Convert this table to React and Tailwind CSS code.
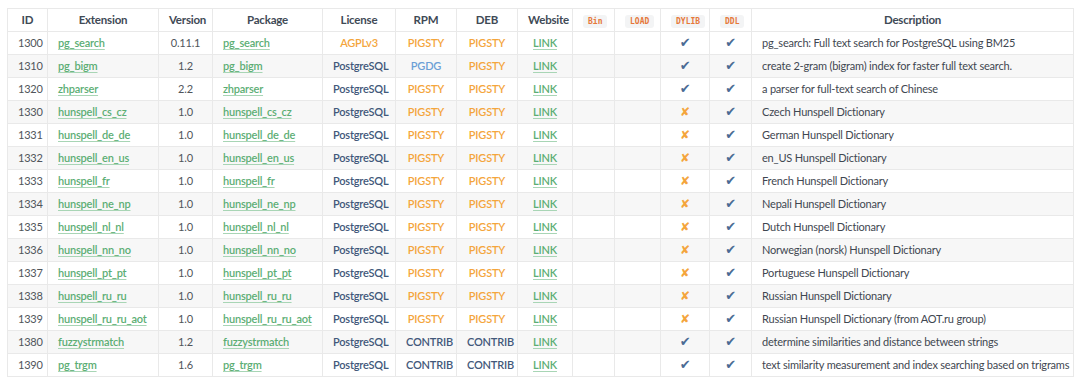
import React from "react";

const rows = [
  ["1300", "pg_search", "0.11.1", "pg_search", "AGPLv3", "PIGSTY", "PIGSTY", false, "pg_search: Full text search for PostgreSQL using BM25"],
  ["1310", "pg_bigm", "1.2", "pg_bigm", "PostgreSQL", "PGDG", "PIGSTY", false, "create 2-gram (bigram) index for faster full text search."],
  ["1320", "zhparser", "2.2", "zhparser", "PostgreSQL", "PIGSTY", "PIGSTY", false, "a parser for full-text search of Chinese"],
  ["1330", "hunspell_cs_cz", "1.0", "hunspell_cs_cz", "PostgreSQL", "PIGSTY", "PIGSTY", true, "Czech Hunspell Dictionary"],
  ["1331", "hunspell_de_de", "1.0", "hunspell_de_de", "PostgreSQL", "PIGSTY", "PIGSTY", true, "German Hunspell Dictionary"],
  ["1332", "hunspell_en_us", "1.0", "hunspell_en_us", "PostgreSQL", "PIGSTY", "PIGSTY", true, "en_US Hunspell Dictionary"],
  ["1333", "hunspell_fr", "1.0", "hunspell_fr", "PostgreSQL", "PIGSTY", "PIGSTY", true, "French Hunspell Dictionary"],
  ["1334", "hunspell_ne_np", "1.0", "hunspell_ne_np", "PostgreSQL", "PIGSTY", "PIGSTY", true, "Nepali Hunspell Dictionary"],
  ["1335", "hunspell_nl_nl", "1.0", "hunspell_nl_nl", "PostgreSQL", "PIGSTY", "PIGSTY", true, "Dutch Hunspell Dictionary"],
  ["1336", "hunspell_nn_no", "1.0", "hunspell_nn_no", "PostgreSQL", "PIGSTY", "PIGSTY", true, "Norwegian (norsk) Hunspell Dictionary"],
  ["1337", "hunspell_pt_pt", "1.0", "hunspell_pt_pt", "PostgreSQL", "PIGSTY", "PIGSTY", true, "Portuguese Hunspell Dictionary"],
  ["1338", "hunspell_ru_ru", "1.0", "hunspell_ru_ru", "PostgreSQL", "PIGSTY", "PIGSTY", true, "Russian Hunspell Dictionary"],
  ["1339", "hunspell_ru_ru_aot", "1.0", "hunspell_ru_ru_aot", "PostgreSQL", "PIGSTY", "PIGSTY", true, "Russian Hunspell Dictionary (from AOT.ru group)"],
  ["1380", "fuzzystrmatch", "1.2", "fuzzystrmatch", "PostgreSQL", "CONTRIB", "CONTRIB", false, "determine similarities and distance between strings"],
  ["1390", "pg_trgm", "1.6", "pg_trgm", "PostgreSQL", "CONTRIB", "CONTRIB", false, "text similarity measurement and index searching based on trigrams"],
];

function Repo({ v }) {
  if (v === "PGDG") return <span className="text-[#6b9fd6] font-semibold">PGDG</span>;
  if (v === "CONTRIB") return <span className="text-[#42587a] font-semibold">CONTRIB</span>;
  return <span className="text-[#f4a53c] font-semibold">{v}</span>;
}

function License({ v }) {
  if (v === "AGPLv3") return <span className="text-[#f4a53c] font-semibold">AGPLv3</span>;
  return <span className="text-[#42587a] font-semibold">{v}</span>;
}

function Badge({ children }) {
  return (
    <code className="rounded-[3px] bg-[#f3f4f5] px-[5px] py-[2px] font-['DejaVu_Sans_Mono',monospace] text-[8px] font-semibold tracking-normal text-[#e6783a]">
      {children}
    </code>
  );
}

function Link({ children }) {
  return (
    <span className="font-semibold text-[#5cae74] underline decoration-[#a8d5b5] underline-offset-2">
      {children}
    </span>
  );
}

const cell = "border border-[#e9e9e9] px-[10px] py-0";

export default function App() {
  return (
    <div className="bg-white w-[1080px] h-[385px] pt-[8px] pl-[7px] font-['Lato','Liberation_Sans',sans-serif] text-[11px] tracking-[-0.2px] text-[#3a4553]">
      <table className="table-fixed border-collapse w-[1066px]">
        <colgroup>
          <col className="w-[40px]" />
          <col className="w-[111px]" />
          <col className="w-[54px]" />
          <col className="w-[110px]" />
          <col className="w-[73px]" />
          <col className="w-[61px]" />
          <col className="w-[61px]" />
          <col className="w-[55px]" />
          <col className="w-[42px]" />
          <col className="w-[46px]" />
          <col className="w-[49px]" />
          <col className="w-[42px]" />
          <col className="w-[322px]" />
        </colgroup>
        <thead>
          <tr className="h-[23px]">
            {["ID", "Extension", "Version", "Package", "License", "RPM", "DEB", "Website"].map((h) => (
              <th key={h} className={`${cell} text-center text-[11.5px] font-bold text-[#3f4a56]`}>{h}</th>
            ))}
            {["Bin", "LOAD", "DYLIB", "DDL"].map((h) => (
              <th key={h} className={`${cell} text-center px-0`}><Badge>{h}</Badge></th>
            ))}
            <th className={`${cell} text-center text-[11.5px] font-bold text-[#3f4a56]`}>Description</th>
          </tr>
        </thead>
        <tbody>
          {rows.map((r, i) => (
            <tr key={r[0]} className={`h-[23px] ${i % 2 === 1 ? "bg-[#f7f7f7]" : "bg-white"}`}>
              <td className={`${cell} text-center text-[#50555b]`}>{r[0]}</td>
              <td className={`${cell} text-left whitespace-nowrap`}><Link>{r[1]}</Link></td>
              <td className={`${cell} text-center text-[#50555b]`}>{r[2]}</td>
              <td className={`${cell} text-left whitespace-nowrap`}><Link>{r[3]}</Link></td>
              <td className={`${cell} text-center`}><License v={r[4]} /></td>
              <td className={`${cell} text-center`}><Repo v={r[5]} /></td>
              <td className={`${cell} text-center`}><Repo v={r[6]} /></td>
              <td className={`${cell} text-center`}><Link>LINK</Link></td>
              <td className={cell}></td>
              <td className={cell}></td>
              <td className={`${cell} text-center font-['DejaVu_Sans',sans-serif] text-[13px]`}>
                {r[7] ? <span className="text-[12px] text-[#f4a53c]">✘</span> : <span className="text-[#4b6b94]">✔</span>}
              </td>
              <td className={`${cell} text-center font-['DejaVu_Sans',sans-serif] text-[13px] text-[#4b6b94]`}>✔</td>
              <td className={`${cell} text-left whitespace-nowrap text-[#3f4751]`}>{r[8]}</td>
            </tr>
          ))}
        </tbody>
      </table>
    </div>
  );
}
